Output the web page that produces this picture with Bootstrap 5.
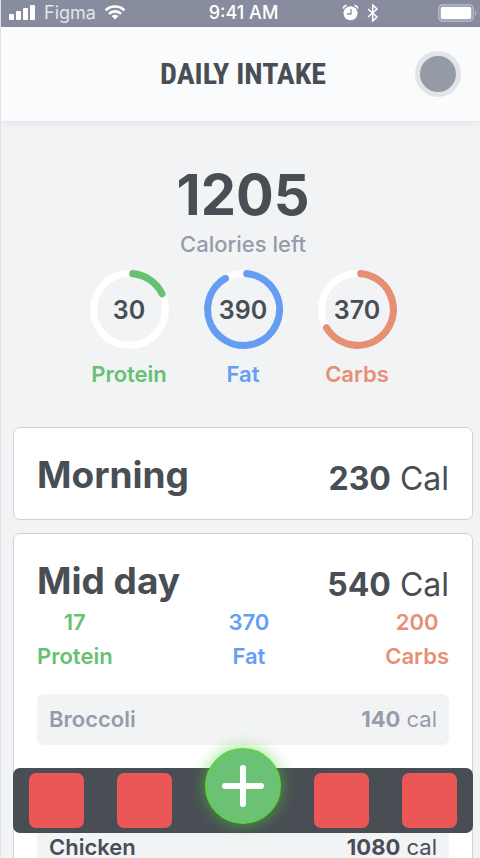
<!DOCTYPE html>
<html lang="en">
<head>
<meta charset="utf-8">
<meta name="viewport" content="width=device-width, initial-scale=1">
<title>Daily Intake</title>
<link href="https://cdn.jsdelivr.net/npm/bootstrap@5.3.0/dist/css/bootstrap.min.css" rel="stylesheet">
<style>
  :root { --ink: #494e55; --muted: #969ca9; --protein: #68c072; --fat: #659df2; --carbs: #e68f74; --panel: #f2f3f5; }
  body { font-family: Inter, "Liberation Sans", sans-serif; color: var(--ink); background: var(--panel); }
  .app { border-left: 1px solid #e3e4e7; }
  .status { background: #878d9f; color: #fff; height: 27px; font-size: 18px; line-height: 24px; padding: 0 2px 2px 8px; }
  .carrier { color: #e3e5ea; }
  .alarm { margin-left: 64px; }
  .topbar { background: #fafbfd; height: 94px; box-shadow: 0 2px 8px rgba(60, 64, 72, .08); padding: 0 19px 0 24px; }
  .side { width: 46px; }
  .title { font-family: "Roboto Condensed", Roboto, "Liberation Sans", sans-serif; font-size: 30px; line-height: 36px; font-weight: 700; }
  .avatar { width: 46px; height: 46px; border: 5px solid #e3e4e8; background: #949aa6; }
  .content { padding: 42px 7px 0 12px; scrollbar-width: none; }
  .content::-webkit-scrollbar { display: none; }
  .total { font-size: 56px; line-height: 64px; font-weight: 700; }
  .caption { font-size: 22px; line-height: 34px; font-weight: 500; color: var(--muted); }
  .rings { gap: 35px; margin-top: 9px; }
  .ring { display: grid; width: 79px; height: 79px; }
  .ring > * { grid-area: 1 / 1; place-self: center; }
  .ring circle, .ring path { fill: none; stroke: #fff; stroke-width: 7; stroke-linecap: round; }
  .ring .arc { stroke: currentColor; }
  .amount { font-size: 25px; line-height: 28px; font-weight: 600; color: var(--ink); }
  .macro { font-size: 22px; line-height: 34px; font-weight: 600; }
  .protein { color: var(--protein); } .fat { color: var(--fat); } .carbs { color: var(--carbs); }
  .meals { margin-top: 36px; gap: 13px; }
  .meal { border: 1px solid #cfd2da; border-radius: 7px; color: var(--ink); padding: 23px 23px 20px; }
  .meal h2 { font-size: 37px; line-height: 48px; font-weight: 700; }
  .cal { font-size: 32px; line-height: 40px; }
  .foods { margin-top: 21px; gap: 77px; }
  .food { background: var(--panel); border-radius: 7px; padding: 10px 12px; font-size: 22px; line-height: 31px; }
  .eaten { color: var(--muted); }
  .dock { padding: 0 7px 25px 13px; }
  .dockbar { background: var(--ink); border-radius: 7px; height: 65px; padding: 0 16px; }
  .tiles { gap: 33px; }
  .tile { width: 55px; height: 55px; border: 0; border-radius: 7px; background: #eb5757; }
  .add { width: 76px; height: 76px; margin-bottom: 29px; background: #6bc174; border: 2px solid #5fd047; box-shadow: 0 0 16px rgba(82, 211, 54, .65); }
</style>
<script src="https://cdn.jsdelivr.net/npm/bootstrap@5.3.0/dist/js/bootstrap.bundle.min.js"></script>
</head>
<body>
<div class="app vh-100 d-flex flex-column overflow-hidden">
  <div class="status row g-0 align-items-center flex-shrink-0">
    <div class="col d-flex align-items-center">
      <svg width="27" height="16" viewBox="0 0 27 16" fill="#fff" aria-hidden="true"><rect x="0" y="9" width="5" height="6" rx="1"/><rect x="7" y="6" width="5" height="9" rx="1"/><rect x="14" y="3" width="5" height="12" rx="1"/><rect x="21" y="0" width="5" height="15" rx="1"/></svg>
      <span class="carrier ms-2">Figma</span>
      <svg class="ms-2" width="22" height="15" viewBox="0 0 24 16" aria-hidden="true"><g fill="none" stroke="#fff" stroke-width="2.8"><path d="M1.7 5.6a14.8 14.8 0 0 1 20.6 0"/><path d="M5.4 9.5a9.4 9.4 0 0 1 13.2 0"/></g><path d="M8.3 11.8a5.5 5.5 0 0 1 7.4 0L12 15.6z" fill="#fff"/></svg>
    </div>
    <div class="col-auto fw-medium">9:41 AM</div>
    <div class="col d-flex align-items-center">
      <svg class="alarm" width="17" height="17" viewBox="0 0 17 17" aria-hidden="true"><circle cx="8.5" cy="9.3" r="7" fill="#fff"/><path d="M1 4.6Q1.8 2 4.6 1.3M16 4.6Q15.2 2 12.4 1.3" fill="none" stroke="#fff" stroke-width="1.6"/><path d="M9 5v5H5" fill="none" stroke="#878d9f" stroke-width="1.3"/></svg>
      <svg class="ms-2 me-auto" width="12" height="18" viewBox="0 0 12 18" fill="none" stroke="#fff" stroke-width="1.5" aria-hidden="true"><path d="M1 5l9 8-4.3 4V1L10 5l-9 8"/></svg>
      <svg width="40" height="18" viewBox="0 0 40 18" aria-hidden="true"><rect x=".8" y=".8" width="34.4" height="16.4" rx="4" fill="none" stroke="#c1c4cd" stroke-width="1.2"/><rect x="2.7" y="2.8" width="30.6" height="12.4" rx="1.5" fill="#fff"/><path d="M37 6q2.5 3 0 6z" fill="#c1c4cd"/></svg>
    </div>
  </div>
  <header class="topbar d-flex align-items-center justify-content-between flex-shrink-0">
    <div class="side"></div>
    <h1 class="title m-0">DAILY INTAKE</h1>
    <button type="button" class="avatar rounded-circle p-0" aria-label="Profile"></button>
  </header>
  <main class="content flex-grow-1 overflow-auto">
    <div class="text-center">
      <div class="total">1205</div>
      <div class="caption">Calories left</div>
    </div>
    <div class="rings d-flex justify-content-center text-center">
      <div class="protein">
        <div class="ring"><svg width="79" height="79" viewBox="0 0 78 78" aria-hidden="true"><circle cx="39" cy="39" r="35.5"/><path class="arc" d="M42.2 3.6A35.5 35.5 0 0 1 71.1 23.5"/></svg><span class="amount">30</span></div>
        <div class="macro mt-2">Protein</div>
      </div>
      <div class="fat">
        <div class="ring"><svg width="79" height="79" viewBox="0 0 78 78" aria-hidden="true"><circle cx="39" cy="39" r="35.5"/><path class="arc" d="M42.2 3.6A35.5 35.5 0 1 1 21.2 8.3"/></svg><span class="amount">390</span></div>
        <div class="macro mt-2">Fat</div>
      </div>
      <div class="carbs">
        <div class="ring"><svg width="79" height="79" viewBox="0 0 78 78" aria-hidden="true"><circle cx="39" cy="39" r="35.5"/><path class="arc" d="M42.2 3.6A35.5 35.5 0 1 1 8.4 57"/></svg><span class="amount">370</span></div>
        <div class="macro mt-2">Carbs</div>
      </div>
    </div>
    <div class="meals d-flex flex-column">
      <section class="card meal">
        <div class="d-flex justify-content-between align-items-end">
          <h2 class="m-0">Morning</h2>
          <div class="cal"><b>230</b> Cal</div>
        </div>
      </section>
      <section class="card meal">
        <div class="d-flex justify-content-between align-items-end">
          <h2 class="m-0">Mid day</h2>
          <div class="cal"><b>540</b> Cal</div>
        </div>
        <div class="d-flex justify-content-between text-center macro">
          <div class="protein">17<br>Protein</div>
          <div class="fat">370<br>Fat</div>
          <div class="carbs">200<br>Carbs</div>
        </div>
        <div class="foods d-flex flex-column">
          <div class="food eaten d-flex justify-content-between"><span class="fw-semibold">Broccoli</span><span><b>140</b> cal</span></div>
          <div class="food d-flex justify-content-between"><span class="fw-semibold">Chicken</span><span><b>1080</b> cal</span></div>
        </div>
      </section>
    </div>
  </main>
</div>
<nav class="dock fixed-bottom" aria-label="Main">
  <div class="dockbar d-flex align-items-center justify-content-between">
    <div class="tiles d-flex"><button type="button" class="tile" aria-label="Home"></button><button type="button" class="tile" aria-label="Diary"></button></div>
    <button type="button" class="add rounded-circle p-0 d-flex align-items-center justify-content-center" aria-label="Add food"><svg width="44" height="44" viewBox="0 0 44 44" stroke="#fff" stroke-width="6" stroke-linecap="round" aria-hidden="true"><path d="M22 4v36M4 22h36"/></svg></button>
    <div class="tiles d-flex"><button type="button" class="tile" aria-label="Reports"></button><button type="button" class="tile" aria-label="Settings"></button></div>
  </div>
</nav>
</body>
</html>
